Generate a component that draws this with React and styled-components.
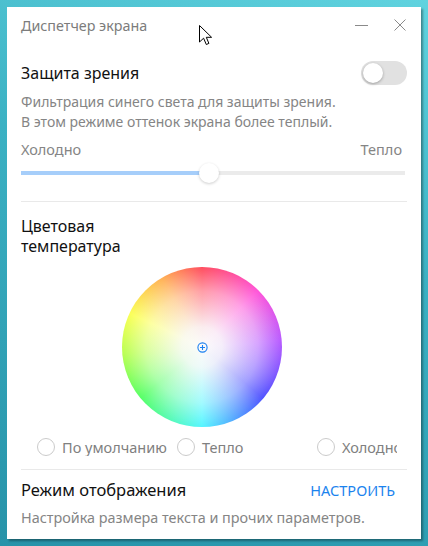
import styled, { createGlobalStyle } from 'styled-components'

const Global = createGlobalStyle`
  html, body {
    margin: 0;
    padding: 0;
  }
  body {
    width: 428px;
    height: 546px;
    overflow: hidden;
    background: linear-gradient(200deg, #60d3df 0%, #3bb1c3 40%, #2793a9 100%);
    font-family: "Noto Sans", "Open Sans", sans-serif;
  }
`

const Window = styled.div`
  position: relative;
  margin: 7px;
  width: 414px;
  height: 532px;
  box-sizing: border-box;
  padding: 0 14px;
  background: #fff;
  box-shadow: 2px 2px 2px rgba(0, 0, 0, 0.35);
  display: flex;
  flex-direction: column;
`

const TitleBar = styled.div`
  height: 36px;
  display: flex;
  align-items: center;
  justify-content: space-between;
`

const Title = styled.div`
  font-size: 14.3px;
  color: #7c7c7c;
`

const Controls = styled.div`
  display: flex;
  align-items: center;
  gap: 26px;
  margin-right: 1px;
`

const Row = styled.div`
  display: flex;
  align-items: center;
  justify-content: space-between;
  margin-top: ${p => p.$mt || 0}px;
  height: ${p => p.$h || 20}px;
`

const Heading = styled.div`
  font-size: ${p => p.$size || 16}px;
  line-height: 20px;
  color: #111;
`

const Note = styled.div`
  font-size: ${p => p.$size || 14}px;
  line-height: 20px;
  color: #858585;
  margin-top: ${p => p.$mt || 0}px;
`

const Toggle = styled.div`
  width: 46px;
  height: 24px;
  border-radius: 12px;
  background: #e1e1e1;
  display: flex;
  align-items: center;
  padding: 0 2px;
  box-sizing: border-box;
`

const Knob = styled.div`
  width: 20px;
  height: 20px;
  border-radius: 50%;
  background: #fff;
  box-shadow: 0 1px 3px rgba(0, 0, 0, 0.3);
`

const Slider = styled.div`
  position: relative;
  margin-top: 4px;
  height: 20px;
  display: flex;
  align-items: center;
  margin-right: 2px;
`

const Track = styled.div`
  flex: 1;
  height: 4px;
  background: #ebebeb;
`

const Fill = styled.div`
  height: 100%;
  background: #a6cefa;
`

const Thumb = styled.div`
  position: absolute;
  top: 0;
  width: 20px;
  height: 20px;
  margin-left: -10px;
  border-radius: 50%;
  background: #fff;
  box-shadow: 0 1px 3px rgba(0, 0, 0, 0.2);
`

const Divider = styled.div`
  height: 1px;
  background: #e9e9e9;
  margin-top: ${p => p.$mt || 0}px;
`

const WheelWrap = styled.div`
  margin-top: 11px;
  padding-left: 101px;
`

const Wheel = styled.div`
  width: 160px;
  height: 160px;
  border-radius: 50%;
  display: flex;
  align-items: center;
  justify-content: center;
  background:
    radial-gradient(closest-side, #fbfbfb 0%, rgba(250, 250, 250, 0.92) 25%, rgba(255, 255, 255, 0.45) 70%, rgba(255, 255, 255, 0) 100%),
    conic-gradient(#ff4d5e 0deg, #ff52d8 45deg, #b85aff 85deg, #4f52ff 130deg, #55f6ff 180deg, #55ff66 230deg, #b8ff50 265deg, #fbff55 295deg, #ffb055 330deg, #ff4d5e 360deg);
`

const Radios = styled.div`
  margin-top: 11px;
  padding-left: 16px;
  display: grid;
  grid-template-columns: 140px 140px 80px;
  height: 18px;
`

const RadioItem = styled.div`
  display: flex;
  align-items: center;
  gap: 7px;
  overflow: hidden;
  white-space: nowrap;
  font-size: 14.5px;
  color: #808080;
`

const RadioCircle = styled.div`
  flex: none;
  width: 18px;
  height: 18px;
  box-sizing: border-box;
  border-radius: 50%;
  border: 1.5px solid #cbcbcb;
`

const Link = styled.div`
  font-size: 14.5px;
  color: #1b83ee;
  margin-right: 12px;
`

const Cursor = styled.svg`
  position: absolute;
  left: 192px;
  top: 18px;
`

const Minimize = () => (
  <svg width="13" height="12" viewBox="0 0 13 12">
    <path d="M0 6.5h13" stroke="#8a8a8a" strokeWidth="1" />
  </svg>
)

const Close = () => (
  <svg width="12" height="12" viewBox="0 0 12 12">
    <path d="M0.5 0.5l11 11M11.5 0.5l-11 11" stroke="#8a8a8a" strokeWidth="1" />
  </svg>
)

const Target = () => (
  <svg width="11" height="11" viewBox="0 0 11 11">
    <circle cx="5.5" cy="5.5" r="4.6" fill="none" stroke="#1a7ff0" strokeWidth="1.1" />
    <path d="M5.5 3v5M3 5.5h5" stroke="#1a7ff0" strokeWidth="1.1" />
  </svg>
)

function Radio({ label }) {
  return (
    <RadioItem>
      <RadioCircle />
      {label}
    </RadioItem>
  )
}

export default function App() {
  const level = 0.49
  return (
    <>
      <Global />
      <Window>
        <TitleBar>
          <Title>Диспетчер экрана</Title>
          <Controls>
            <Minimize />
            <Close />
          </Controls>
        </TitleBar>

        <Row $mt={18} $h={24}>
          <Heading>Защита зрения</Heading>
          <Toggle><Knob /></Toggle>
        </Row>
        <Note $mt={7}>
          Фильтрация синего света для защиты зрения.<br />
          В этом режиме оттенок экрана более теплый.
        </Note>
        <Row $mt={7}>
          <Note $size={14.5}>Холодно</Note>
          <Note $size={14.5} style={{ marginRight: 5 }}>Тепло</Note>
        </Row>
        <Slider>
          <Track><Fill style={{ width: `${level * 100}%` }} /></Track>
          <Thumb style={{ left: `${level * 100}%` }} />
        </Slider>

        <Divider $mt={18} />

        <Heading style={{ marginTop: 14 }}>Цветовая<br />температура</Heading>
        <WheelWrap>
          <Wheel><Target /></Wheel>
        </WheelWrap>
        <Radios>
          <Radio label="По умолчанию" />
          <Radio label="Тепло" />
          <Radio label="Холодно" />
        </Radios>

        <Divider $mt={13} />
        <Row $mt={10}>
          <Heading $size={16.5}>Режим отображения</Heading>
          <Link>НАСТРОИТЬ</Link>
        </Row>
        <Note $mt={8} $size={14.4}>Настройка размера текста и прочих параметров.</Note>

        <Cursor width="14" height="21" viewBox="0 0 14 21">
          <path d="M0.5 0.5V17L4.6 13.2L7.3 19.5L9.9 18.4L7.3 12.3H12.6Z" fill="#fff" stroke="#000" strokeWidth="1" strokeLinejoin="round" />
        </Cursor>
      </Window>
    </>
  )
}
